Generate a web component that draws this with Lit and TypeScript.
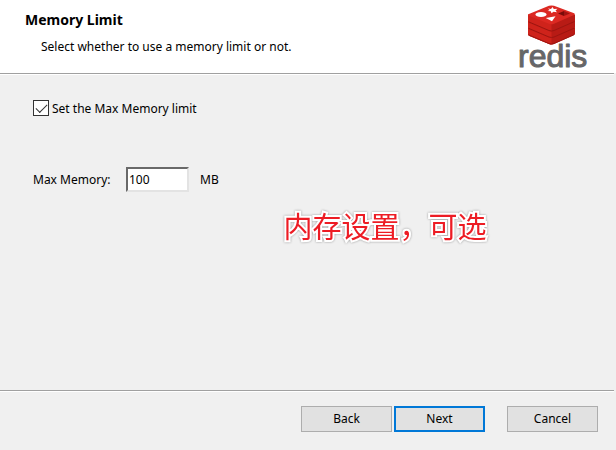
import { LitElement, html, css, svg } from "lit";
import { customElement, state } from "lit/decorators.js";

@customElement("redis-logo")
class RedisLogo extends LitElement {
  static styles = css`
    :host { display: block; width: 72px; height: 73px; }
    svg { display: block; overflow: visible; }
    .word {
      font-family: "Liberation Sans", Arial, sans-serif;
      font-size: 32px;
      fill: #666668;
      stroke: #666668;
      stroke-width: 1;
      stroke-linejoin: round;
    }
  `;

  private layer(y: number) {
    return svg`
      <g transform="translate(0 ${y})">
        <path fill="#b81b15" d="M11 9.500 H58 V15.500 Q58 16.500 56 17.500 L37 26 Q34.500 27 32 26 L12.500 18 Q11 17.300 11 16 Z"/>
        <path fill="#cf231b" d="M11 9.500 L34.500 19 V26.600 Q33 26.600 32 26 L12.500 18 Q11 17.300 11 16 Z"/>
        <path fill="none" stroke="#9c1510" stroke-width="1" d="M11.500 16.800 L32 25.500 Q34.500 26.500 37 25.500 L57.500 16.500"/>
        <path fill="#dc2922" d="M12.500 8.700 L32 .8 Q34.500 0 37 .8 L56.500 8 Q59 9 56.500 10.300 L37 18.800 Q34.500 19.800 32 18.800 L12.500 11 Q10 9.800 12.500 8.700 Z"/>
      </g>`;
  }

  render() {
    return html`
      <svg width="72" height="73" viewBox="0 -4 72 73" role="img" aria-label="redis">
        ${this.layer(14)} ${this.layer(7.5)} ${this.layer(1)}
        <ellipse cx="24" cy="10.500" rx="5.500" ry="2.600" fill="#fff"/>
        <path fill="#fff" d="M31 4.500 L34 5 L35.500 3 L36.800 5 L40.500 4.800 L38.500 6.500 L40 8.200 L36.500 7.700 L34.500 9.200 L33.800 7.300 L30.500 7 L32.800 6 Z"/>
        <path fill="#fff" d="M28.800 14 L38.500 12.300 L35 17.200 Z"/>
        <path fill="#7a0c0a" d="M41 9.500 L47 7 V12 Z"/>
        <path fill="#a31411" d="M47 7 L53 9.500 L47 12 Z"/>
        <text class="word" x="1" y="63">redis</text>
      </svg>
    `;
  }
}

@customElement("app-root")
class AppRoot extends LitElement {
  @state() private limited = true;

  static styles = css`
    :host {
      display: flex;
      flex-direction: column;
      min-height: 100vh;
      background: #f0f0f0;
      color: #000;
      font-family: "Noto Sans", Tahoma, "Noto Sans CJK SC", sans-serif;
      font-size: 12px;
      line-height: 16px;
    }
    * { box-sizing: border-box; }
    header {
      display: flex;
      justify-content: space-between;
      padding: 0 27px 0 25px;
      background: #fff;
    }
    h1 { margin: 10px 0 0; font-size: 14px; line-height: 20px; }
    .subtitle { margin: 9px 0 0 16px; }
    .rule { height: 2px; margin-right: 2px; background: #a0a0a0; border-bottom: 1px solid #fff; }
    main {
      flex: 1;
      display: flex;
      flex-direction: column;
      align-items: flex-start;
      padding: 25px 33px 0;
    }
    .check { display: flex; align-items: flex-start; gap: 3px; line-height: 18px; }
    .tick {
      appearance: none;
      display: grid;
      place-items: center;
      width: 16px;
      height: 16px;
      margin: 0;
      border: 1px solid #333;
      background: #fff;
    }
    .tick:checked::before {
      content: "";
      width: 10px;
      height: 5px;
      margin-top: -3px;
      border: solid #333;
      border-width: 0 0 1px 1px;
      transform: rotate(-45deg);
    }
    .field { display: flex; align-items: center; margin-top: 49px; }
    .field label { width: 93px; }
    .amount {
      width: 63px;
      height: 25px;
      margin-right: 11px;
      padding: 0 1px 1px;
      border: 2px solid;
      border-color: #696969 #e3e3e3 #e3e3e3 #696969;
      outline: 0;
      background: #fff;
      color: #000;
      font: inherit;
    }
    .note {
      align-self: center;
      margin: 13px 0 0 154px;
      font-family: "Noto Sans CJK SC", sans-serif;
      font-size: 29px;
      line-height: 40px;
      color: #ed1c24;
      -webkit-text-stroke: 4px #fff;
      paint-order: stroke fill;
      filter: drop-shadow(0 0 1px #999);
    }
    footer {
      display: flex;
      justify-content: flex-end;
      gap: 2px;
      padding: 14px 18px 18px;
    }
    button {
      width: 91px;
      height: 26px;
      padding: 0;
      border: 1px solid #adadad;
      background: #e1e1e1;
      color: #000;
      font: inherit;
    }
    .default { border: 2px solid #0078d7; }
    .cancel { margin-left: 20px; }
  `;

  private toggle(e: Event) {
    this.limited = (e.target as HTMLInputElement).checked;
  }

  render() {
    return html`
      <header>
        <div>
          <h1>Memory Limit</h1>
          <p class="subtitle">Select whether to use a memory limit or not.</p>
        </div>
        <redis-logo></redis-logo>
      </header>
      <div class="rule"></div>
      <main>
        <label class="check">
          <input class="tick" type="checkbox" .checked=${this.limited} @change=${this.toggle} />
          Set the Max Memory limit
        </label>
        <div class="field">
          <label for="amount">Max Memory:</label>
          <input class="amount" id="amount" type="text" value="100" ?disabled=${!this.limited} />
          <span>MB</span>
        </div>
        <p class="note">内存设置，可选</p>
      </main>
      <div class="rule"></div>
      <footer>
        <button type="button">Back</button>
        <button type="button" class="default">Next</button>
        <button type="button" class="cancel">Cancel</button>
      </footer>
    `;
  }
}
